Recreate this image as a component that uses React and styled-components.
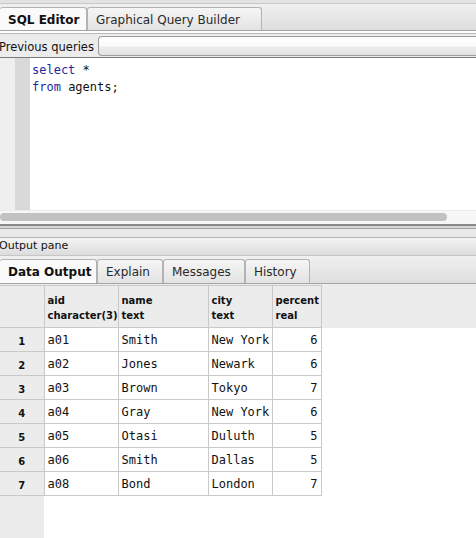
import React from 'react'
import styled, { createGlobalStyle } from 'styled-components'

const GlobalStyle = createGlobalStyle`
  html, body {
    margin: 0;
    padding: 0;
    background: #ffffff;
    overflow: hidden;
  }
  * { box-sizing: border-box; }
`

const UI_FONT = `"DejaVu Sans", "Lucida Grande", sans-serif`
const MONO_FONT = `"DejaVu Sans Mono", monospace`

const Window = styled.div`
  width: 476px;
  height: 538px;
  display: flex;
  flex-direction: column;
  font-family: ${UI_FONT};
  color: #111;
  overflow: hidden;
`

const TopStrip = styled.div`
  height: 4px;
  background: #e3e3e3;
  border-bottom: 1px solid #c9c9c9;
  flex-shrink: 0;
`

const TabBar = styled.div`
  height: ${p => p.h}px;
  display: flex;
  align-items: flex-end;
  background: linear-gradient(#f0f0f0, #dedede);
  border-bottom: 1px solid #a4a4a4;
  flex-shrink: 0;
`

const Tab = styled.div`
  width: ${p => p.w}px;
  height: ${p => p.h}px;
  padding: 1px 0 0 8px;
  display: flex;
  align-items: center;
  font-size: 12px;
  font-weight: ${p => (p.active ? 700 : 400)};
  color: ${p => (p.active ? '#111' : '#2a2a2a')};
  border: 1px solid #b3b3b3;
  border-bottom: none;
  border-left: ${p => (p.first ? 'none' : '1px solid #b3b3b3')};
  border-radius: 3px 3px 0 0;
  background: ${p => (p.active ? '#fafafa' : 'linear-gradient(#f5f5f5, #e3e3e3)')};
  white-space: nowrap;
`

const QueryRow = styled.div`
  height: 26px;
  display: flex;
  align-items: center;
  background: #ececec;
  border-top: 2px solid #ffffff;
  box-shadow: inset 0 1px 0 #b8b8b8;
  padding-top: 3px;
  flex-shrink: 0;
`

const QueryLabel = styled.span`
  font-size: 11.5px;
  margin-left: -1px;
  margin-right: 4px;
  white-space: nowrap;
`

const Combo = styled.div`
  flex: 1;
  height: 20px;
  margin-top: -1px;
  border: 1px solid #9c9c9c;
  border-right: none;
  border-radius: 4px 0 0 4px;
  background: linear-gradient(#ffffff 0%, #fbfbfb 50%, #ececec 56%, #e2e2e2 100%);
`

const Editor = styled.div`
  height: 153px;
  display: flex;
  border-top: 1px solid #7c7c7c;
  background: #ffffff;
  flex-shrink: 0;
`

const Gutter = styled.div`
  width: 15px;
  background: ${p => p.shade};
  flex-shrink: 0;
`

const Code = styled.pre`
  margin: 0;
  padding: 4px 2px;
  font-family: ${MONO_FONT};
  font-size: 12px;
  line-height: 17px;
  color: #111;
`

const Keyword = styled.span`
  color: #1d2a9e;
`

const HScroll = styled.div`
  height: 13px;
  padding: 2px 29px 0 0;
  background: #f7f7f7;
  border-top: 1px solid #ebebeb;
  flex-shrink: 0;
`

const Thumb = styled.div`
  height: 8px;
  border-radius: 4px;
  background: #c2c2c2;
`

const Splitter = styled.div`
  height: 14px;
  background: linear-gradient(
    #f7f7f7 0px, #f7f7f7 1px,
    #8a8a8a 1px, #8a8a8a 3px,
    #d6d6d6 3px, #d6d6d6 5px,
    #a2a2a2 5px, #a2a2a2 6px,
    #e9e9e9 6px, #e9e9e9 100%
  );
  flex-shrink: 0;
`

const PaneTitle = styled.div`
  height: 19px;
  display: flex;
  align-items: center;
  font-size: 11px;
  padding: 0 0 2px 0;
  text-indent: -1px;
  background: linear-gradient(#f4f4f4, #dcdcdc);
  border-top: 1px solid #b3b3b3;
  border-bottom: 1px solid #c6c6c6;
  flex-shrink: 0;
`

const GridArea = styled.div`
  flex: 1;
  padding-top: 1px;
  background:
    linear-gradient(#ececec, #ececec) 0 0 / 100% 44px no-repeat,
    linear-gradient(to right, #ececec 44px, #ffffff 44px);
`

const Table = styled.table`
  border-collapse: collapse;
  border-top: 1px solid #c9c9c9;
  table-layout: fixed;
`

const HeadCell = styled.th`
  width: ${p => p.w}px;
  height: 42px;
  padding: 3px 0 0 3px;
  background: #ececec;
  border: 1px solid #c9c9c9;
  border-left: ${p => (p.corner ? 'none' : '1px solid #c9c9c9')};
  text-align: left;
  vertical-align: middle;
  font-size: 10px;
  font-weight: 700;
  line-height: 15px;
  white-space: nowrap;
`

const RowNum = styled.th`
  height: 24px;
  background: #ececec;
  border: 1px solid #c9c9c9;
  border-left: none;
  font-size: 10px;
  font-weight: 700;
  text-align: center;
  padding: 3px 0 0 0;
`

const Cell = styled.td`
  height: 24px;
  padding: 0 ${p => (p.num ? '3px' : '0')} 0 ${p => (p.num ? '0' : '3px')};
  border: 1px solid #c9c9c9;
  font-family: ${MONO_FONT};
  font-size: 12px;
  text-align: ${p => (p.num ? 'right' : 'left')};
  background: #ffffff;
  white-space: nowrap;
  overflow: hidden;
`

const columns = [
  { name: 'aid', type: 'character(3)', w: 74 },
  { name: 'name', type: 'text', w: 90 },
  { name: 'city', type: 'text', w: 64 },
  { name: 'percent', type: 'real', w: 49 },
]

const rows = [
  ['a01', 'Smith', 'New York', '6'],
  ['a02', 'Jones', 'Newark', '6'],
  ['a03', 'Brown', 'Tokyo', '7'],
  ['a04', 'Gray', 'New York', '6'],
  ['a05', 'Otasi', 'Duluth', '5'],
  ['a06', 'Smith', 'Dallas', '5'],
  ['a08', 'Bond', 'London', '7'],
]

export default function App() {
  return (
    <>
      <GlobalStyle />
      <Window>
        <TopStrip />
        <TabBar h={27}>
          <Tab first active w={87} h={23}>SQL Editor</Tab>
          <Tab w={175} h={23}>Graphical Query Builder</Tab>
        </TabBar>
        <QueryRow>
          <QueryLabel>Previous queries</QueryLabel>
          <Combo />
        </QueryRow>
        <Editor>
          <Gutter shade="#efefef" />
          <Gutter shade="#d9d9d9" />
          <Code>
            <Keyword>select</Keyword> *{'\n'}
            <Keyword>from</Keyword> agents;
          </Code>
        </Editor>
        <HScroll>
          <Thumb />
        </HScroll>
        <Splitter />
        <PaneTitle>Output pane</PaneTitle>
        <TabBar h={28}>
          <Tab first active w={97} h={24}>Data Output</Tab>
          <Tab w={66} h={24}>Explain</Tab>
          <Tab w={82} h={24}>Messages</Tab>
          <Tab w={65} h={24}>History</Tab>
        </TabBar>
        <GridArea>
          <Table>
            <thead>
              <tr>
                <HeadCell corner w={44} />
                {columns.map(c => (
                  <HeadCell key={c.name} w={c.w}>
                    {c.name}
                    <br />
                    {c.type}
                  </HeadCell>
                ))}
              </tr>
            </thead>
            <tbody>
              {rows.map((r, i) => (
                <tr key={i}>
                  <RowNum>{i + 1}</RowNum>
                  {r.map((v, j) => (
                    <Cell key={j} num={j === 3}>{v}</Cell>
                  ))}
                </tr>
              ))}
            </tbody>
          </Table>
        </GridArea>
      </Window>
    </>
  )
}
